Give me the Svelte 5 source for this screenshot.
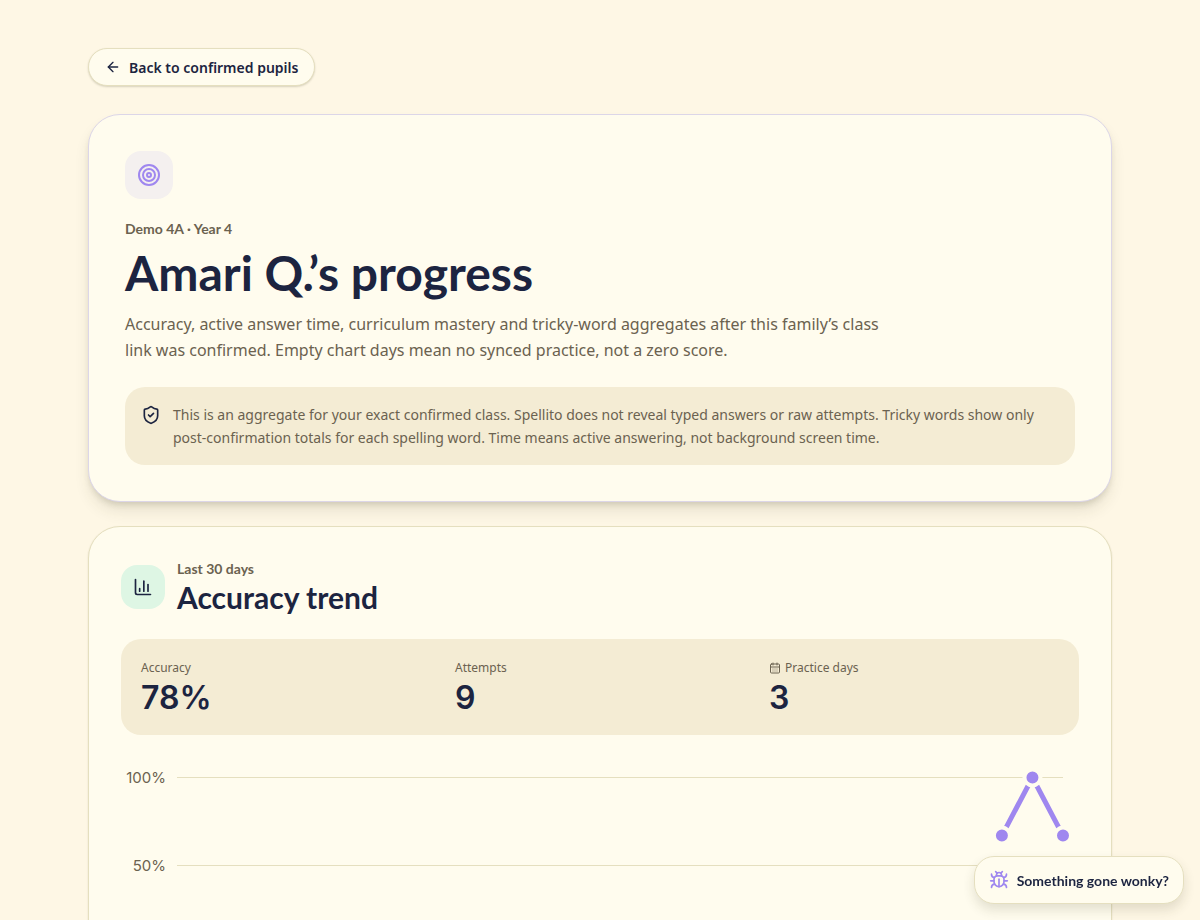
<script lang="ts">
  type Day = {
    index: number; // 0..29, oldest first
    accuracy: number; // 0..1
  };

  const pupil = 'Amari Q.';
  const group = 'Demo 4A · Year 4';

  const stats = [
    { label: 'Accuracy', value: '78%', icon: false },
    { label: 'Attempts', value: '9', icon: false },
    { label: 'Practice days', value: '3', icon: true }
  ];

  const days: Day[] = [
    { index: 27, accuracy: 0.67 },
    { index: 28, accuracy: 1 },
    { index: 29, accuracy: 0.67 }
  ];

  // Chart geometry, in viewBox units
  const chart = { width: 958, height: 220, left: 56, right: 942, top: 18.5, bottom: 194.5 };
  const ticks = [1, 0.5];

  const toX = (index: number): number =>
    chart.left + ((chart.right - chart.left) * index) / 29;

  const toY = (value: number): number =>
    chart.bottom - (chart.bottom - chart.top) * value;

  const line = days.map((d) => `${toX(d.index)},${toY(d.accuracy)}`).join(' ');
</script>

<main class="page">
  <a class="back" href="#pupils">
    <svg class="icon" width="16" height="16" viewBox="0 0 24 24" aria-hidden="true">
      <path d="m12 19-7-7 7-7" />
      <path d="M19 12H5" />
    </svg>
    Back to confirmed pupils
  </a>

  <header class="card hero">
    <span class="tile tile-violet">
      <svg class="icon" width="24" height="24" viewBox="0 0 24 24" aria-hidden="true">
        <circle cx="12" cy="12" r="10" />
        <circle cx="12" cy="12" r="6" />
        <circle cx="12" cy="12" r="2" />
      </svg>
    </span>
    <p class="eyebrow">{group}</p>
    <h1>{pupil}’s progress</h1>
    <p class="lead">
      Accuracy, active answer time, curriculum mastery and tricky-word aggregates after this
      family’s class link was confirmed. Empty chart days mean no synced practice, not a zero score.
    </p>
    <div class="notice">
      <svg class="icon" width="20" height="20" viewBox="0 0 24 24" aria-hidden="true">
        <path
          d="M20 13c0 5-3.5 7.5-7.66 8.95a1 1 0 0 1-.67-.01C7.5 20.5 4 18 4 13V6a1 1 0 0 1 1-1c2 0 4.5-1.2 6.24-2.72a1.17 1.17 0 0 1 1.52 0C14.51 3.81 17 5 19 5a1 1 0 0 1 1 1z"
        />
        <path d="m9 12 2 2 4-4" />
      </svg>
      <p>
        This is an aggregate for your exact confirmed class. Spellito does not reveal typed answers
        or raw attempts. Tricky words show only post-confirmation totals for each spelling word.
        Time means active answering, not background screen time.
      </p>
    </div>
  </header>

  <section class="card trend" aria-labelledby="trend-title">
    <div class="trend-head">
      <span class="tile tile-mint">
        <svg class="icon" width="20" height="20" viewBox="0 0 24 24" aria-hidden="true">
          <path d="M3 3v16a2 2 0 0 0 2 2h16" />
          <path d="M18 17V9" />
          <path d="M13 17V5" />
          <path d="M8 17v-3" />
        </svg>
      </span>
      <div>
        <p class="eyebrow">Last 30 days</p>
        <h2 id="trend-title">Accuracy trend</h2>
      </div>
    </div>

    <dl class="stats">
      {#each stats as stat}
        <div>
          <dt>
            {#if stat.icon}
              <svg class="icon" width="12" height="12" viewBox="0 0 24 24" aria-hidden="true">
                <path d="M8 2v4M16 2v4M3 10h18" />
                <rect x="3" y="4" width="18" height="18" rx="2" />
                <path d="M8 14h.01M12 14h.01M16 14h.01M8 18h.01M12 18h.01M16 18h.01" />
              </svg>
            {/if}
            {stat.label}
          </dt>
          <dd>{stat.value}</dd>
        </div>
      {/each}
    </dl>

    <svg
      class="chart"
      viewBox={`0 0 ${chart.width} ${chart.height}`}
      role="img"
      aria-label="Accuracy over the last 30 days"
    >
      {#each ticks as tick}
        <line class="grid" x1={chart.left} x2={chart.right} y1={toY(tick)} y2={toY(tick)} />
        <text class="tick" x="45" y={toY(tick) + 5.5}>{tick * 100}%</text>
      {/each}
      <polyline class="series" points={line} />
      {#each days as day}
        <circle class="point" cx={toX(day.index)} cy={toY(day.accuracy)} r="8" />
      {/each}
    </svg>
  </section>
</main>

<button class="feedback" type="button">
  <svg class="icon" width="20" height="20" viewBox="0 0 24 24" aria-hidden="true">
    <path d="M12 20v-9" />
    <path d="M14 7a4 4 0 0 1 4 4v3a6 6 0 0 1-12 0v-3a4 4 0 0 1 4-4z" />
    <path d="M14.12 3.88 16 2" />
    <path d="M21 21a4 4 0 0 0-3.81-4" />
    <path d="M21 5a4 4 0 0 1-3.55 3.97" />
    <path d="M22 13h-4" />
    <path d="M3 21a4 4 0 0 1 3.81-4" />
    <path d="M3 5a4 4 0 0 0 3.55 3.97" />
    <path d="M6 13H2" />
    <path d="m8 2 1.88 1.88" />
    <path d="M9 7.13V6a3 3 0 1 1 6 0v1.13" />
  </svg>
  Something gone wonky?
</button>

<style>
  :global(body) {
    margin: 0;
    background: #fef7e5;
  }

  .page {
    --ink: #1c2440;
    --muted: #6b6250;
    --paper: #fffcee;
    --sand: #f4ecd4;
    --rule: #e5dfbf;
    --violet: #9f87ef;
    box-sizing: border-box;
    display: flex;
    flex-direction: column;
    align-items: stretch;
    gap: 24px;
    max-width: 1072px;
    margin: 0 auto;
    padding: 48px 24px;
    color: var(--ink);
    font-family: 'Noto Sans', sans-serif;
  }

  h1,
  h2,
  p,
  dl,
  dd {
    margin: 0;
  }

  .icon {
    flex-shrink: 0;
    fill: none;
    stroke: currentColor;
    stroke-width: 2;
    stroke-linecap: round;
    stroke-linejoin: round;
  }

  .back {
    box-sizing: border-box;
    display: inline-flex;
    align-items: center;
    align-self: flex-start;
    gap: 8px;
    height: 38px;
    margin-bottom: 4px;
    padding: 0 16px;
    border: 1px solid var(--rule);
    border-radius: 999px;
    background: var(--paper);
    box-shadow: 0 1px 2px rgba(60, 60, 30, 0.2);
    color: var(--ink);
    font-size: 14px;
    font-weight: 600;
    text-decoration: none;
  }

  .card {
    border: 1px solid var(--rule);
    border-radius: 32px;
    background: var(--paper);
  }

  .hero {
    padding: 36px;
    border-color: #dcd6e8;
    box-shadow:
      0 10px 16px -2px rgba(60, 60, 30, 0.12),
      0 4px 6px -2px rgba(60, 60, 30, 0.16);
  }

  .tile {
    display: flex;
    align-items: center;
    justify-content: center;
    flex-shrink: 0;
    border-radius: 16px;
  }

  .tile-violet {
    width: 48px;
    height: 48px;
    margin-bottom: 20px;
    background: #f4f0ef;
    color: var(--violet);
  }

  .tile-mint {
    width: 44px;
    height: 44px;
    background: #def6e4;
  }

  .eyebrow {
    color: var(--muted);
    font-family: Lato, sans-serif;
    font-size: 14px;
    font-weight: 700;
    line-height: 20px;
  }

  h1,
  h2 {
    font-family: Lato, sans-serif;
    font-weight: 700;
  }

  h1 {
    margin-top: 8px;
    font-size: 48px;
    line-height: 52px;
  }

  .lead {
    max-width: 768px;
    margin-top: 12px;
    color: var(--muted);
    font-size: 16px;
    line-height: 26px;
  }

  .notice {
    display: flex;
    gap: 12px;
    margin-top: 24px;
    padding: 16px;
    border-radius: 20px;
    background: var(--sand);
  }

  .notice p {
    color: var(--muted);
    font-size: 14px;
    line-height: 23px;
  }

  .notice .icon {
    margin-top: 2px;
  }

  .trend {
    padding: 32px;
    box-shadow: 0 1px 2px rgba(60, 60, 30, 0.14);
  }

  .trend-head {
    display: flex;
    align-items: center;
    gap: 12px;
  }

  h2 {
    font-size: 30px;
    line-height: 36px;
  }

  .stats {
    display: grid;
    grid-template-columns: repeat(3, 1fr);
    gap: 24px;
    margin-top: 24px;
    padding: 20px;
    border-radius: 20px;
    background: var(--sand);
  }

  dt {
    display: flex;
    align-items: center;
    gap: 4px;
    color: var(--muted);
    font-size: 12px;
    line-height: 18px;
  }

  dd {
    margin-top: 4px;
    font-family: Inter, sans-serif;
    font-size: 32px;
    font-weight: 600;
    line-height: 34px;
  }

  .chart {
    display: block;
    width: 100%;
    height: auto;
    margin-top: 24px;
  }

  .grid {
    stroke: var(--rule);
  }

  .tick {
    fill: var(--muted);
    font-family: Inter, sans-serif;
    font-size: 15px;
    text-anchor: end;
  }

  .series {
    fill: none;
    stroke: var(--violet);
    stroke-width: 5;
    stroke-linecap: round;
    stroke-linejoin: round;
  }

  .point {
    fill: var(--violet);
    stroke: var(--paper);
    stroke-width: 4;
  }

  .feedback {
    position: fixed;
    right: 16px;
    bottom: 16px;
    display: flex;
    align-items: center;
    gap: 8px;
    height: 48px;
    padding: 0 14px;
    border: 1px solid #e5dfbf;
    border-radius: 20px;
    background: #fffcee;
    box-shadow: 0 6px 12px rgba(60, 60, 30, 0.14);
    color: #1c2440;
    font-family: Lato, sans-serif;
    font-size: 14px;
    font-weight: 700;
    cursor: pointer;
  }

  .feedback .icon {
    color: #9f87ef;
  }

  @media (max-width: 640px) {
    .page {
      padding: 24px 16px;
    }

    .hero,
    .trend {
      padding: 20px;
    }

    h1 {
      font-size: 36px;
      line-height: 40px;
    }

    .stats {
      grid-template-columns: 1fr;
    }
  }
</style>
